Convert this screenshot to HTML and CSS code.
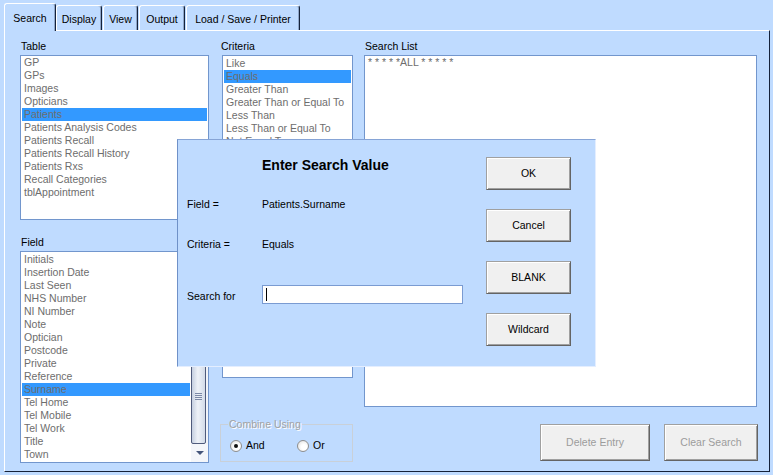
FILE: index.html
```html
<!DOCTYPE html>
<html>
<head>
<meta charset="utf-8">
<title>Search</title>
<link rel="stylesheet" href="styles.css">
</head>
<body>
<div class="tabs">
  <div class="tab tab-active tab-search">Search</div>
  <div class="tab tab-display">Display</div>
  <div class="tab tab-view">View</div>
  <div class="tab tab-output">Output</div>
  <div class="tab tab-load">Load / Save / Printer</div>
</div>
<div class="panel">
  <div class="col col-left">
    <div class="label">Table</div>
    <div class="list list-table">
      <div class="item">GP</div>
      <div class="item">GPs</div>
      <div class="item">Images</div>
      <div class="item">Opticians</div>
      <div class="item sel">Patients</div>
      <div class="item">Patients Analysis Codes</div>
      <div class="item">Patients Recall</div>
      <div class="item">Patients Recall History</div>
      <div class="item">Patients Rxs</div>
      <div class="item">Recall Categories</div>
      <div class="item">tblAppointment</div>
    </div>
    <div class="label label-field">Field</div>
    <div class="list list-field">
      <div class="items">
        <div class="item">Initials</div>
        <div class="item">Insertion Date</div>
        <div class="item">Last Seen</div>
        <div class="item">NHS Number</div>
        <div class="item">NI Number</div>
        <div class="item">Note</div>
        <div class="item">Optician</div>
        <div class="item">Postcode</div>
        <div class="item">Private</div>
        <div class="item">Reference</div>
        <div class="item sel">Surname</div>
        <div class="item">Tel Home</div>
        <div class="item">Tel Mobile</div>
        <div class="item">Tel Work</div>
        <div class="item">Title</div>
        <div class="item">Town</div>
      </div>
      <div class="scrollbar">
        <div class="sb-up"></div>
        <div class="sb-track">
          <div class="sb-thumb"><div class="sb-grip"></div></div>
        </div>
        <div class="sb-down"><span class="sb-arrow"></span></div>
      </div>
    </div>
  </div>
  <div class="col col-criteria">
    <div class="label">Criteria</div>
    <div class="list list-criteria">
      <div class="item">Like</div>
      <div class="item sel">Equals</div>
      <div class="item">Greater Than</div>
      <div class="item">Greater Than or Equal To</div>
      <div class="item">Less Than</div>
      <div class="item">Less Than or Equal To</div>
      <div class="item">Not Equal To</div>
      <div class="item">Not Like</div>
      <div class="item">Is Null</div>
      <div class="item">Is Not Null</div>
    </div>
    <fieldset class="combine">
      <legend>Combine Using</legend>
      <div class="radios">
        <div class="radio radio-and"><span class="radio-dot checked"></span>And</div>
        <div class="radio"><span class="radio-dot"></span>Or</div>
      </div>
    </fieldset>
  </div>
  <div class="col col-search">
    <div class="label">Search List</div>
    <div class="list list-search">
      <div class="item">* * * * *ALL * * * * *</div>
    </div>
    <div class="actions">
      <button class="btn btn-disabled btn-delete">Delete Entry</button>
      <button class="btn btn-disabled btn-clear">Clear Search</button>
    </div>
  </div>
</div>

<div class="dialog">
  <div class="dlg-main">
    <div class="dlg-title">Enter Search Value</div>
    <div class="dlg-row row-field"><span class="dlg-key">Field =</span><span>Patients.Surname</span></div>
    <div class="dlg-row row-criteria"><span class="dlg-key">Criteria =</span><span>Equals</span></div>
    <div class="dlg-row row-search"><span class="dlg-key key-search">Search for</span><div class="dlg-input"><span class="caret"></span></div></div>
  </div>
  <div class="dlg-buttons">
    <button class="btn btn-dlg">OK</button>
    <button class="btn btn-dlg">Cancel</button>
    <button class="btn btn-dlg">BLANK</button>
    <button class="btn btn-dlg">Wildcard</button>
  </div>
</div>
</body>
</html>
```
FILE: styles.css
```css
* { box-sizing: border-box; }
html, body { margin: 0; padding: 0; }
body {
  width: 773px;
  height: 475px;
  overflow: hidden;
  position: relative;
  background: #bfdbff;
  font-family: "Liberation Sans", Arial, sans-serif;
  font-size: 10.5px;
  line-height: 13px;
  color: #000;
}

/* Tabs */
.tabs {
  display: flex;
  align-items: flex-end;
  height: 30px;
  padding: 3px 0 0 4px;
  position: relative;
  z-index: 2;
}
.tab {
  height: 25px;
  padding-top: 7px;
  text-align: center;
  white-space: nowrap;
  background: #bfdbff;
  border-left: 1px solid #fff;
  border-top: 1px solid #fff;
  border-right: 1px solid #15223a;
  border-radius: 3px 3px 0 0;
  box-shadow: inset -1px 0 0 #8ea5c8;
  margin-left: 1px;
}
.tab-active {
  height: 28px;
  margin-bottom: -1px;
  padding-top: 8px;
  margin-left: 0;
}
.tab-search { width: 52px; }
.tab-display { width: 46px; margin-left: 0; }
.tab-view { width: 35px; }
.tab-output { width: 46px; }
.tab-load { width: 114px; }

/* Panel */
.panel {
  position: relative;
  z-index: 1;
  margin-left: 4px;
  width: 766px;
  height: 442px;
  border-top: 1px solid #fff;
  border-left: 1px solid #fff;
  border-right: 1px solid #15223a;
  border-bottom: 1px solid #15223a;
  display: flex;
  align-items: flex-start;
  padding: 9px 0 0 15px;
}
.col { display: flex; flex-direction: column; }
.col-left { width: 189px; }
.col-criteria { width: 131px; margin-left: 13px; }
.col-search { width: 393px; margin-left: 11px; }

.label {
  height: 13px;
  margin-bottom: 2px;
  padding-left: 1px;
  white-space: nowrap;
}
.col-criteria .label { margin-left: -1px; padding-left: 0; }
.label-field { margin-top: 16px; }

.list {
  background: #fff;
  border: 1px solid #7296cd;
  color: #6d6d6d;
  overflow: hidden;
}
.list-table { height: 165px; }
.list-field { height: 212px; display: flex; }
.list-criteria { height: 323px; padding-top: 1px; }
.list-search { height: 352px; }

.item {
  height: 13px;
  margin: 0 1px;
  padding-left: 2px;
  white-space: nowrap;
  overflow: hidden;
}
.item.sel { background: #3399ff; }

.items { flex: 1; padding-top: 1px; overflow: hidden; }

/* Scrollbar */
.scrollbar {
  width: 17px;
  flex: none;
  display: flex;
  flex-direction: column;
  background: #f2f4f8;
}
.sb-up { height: 17px; flex: none; }
.sb-track {
  flex: 1;
  display: flex;
  flex-direction: column;
  justify-content: flex-end;
}
.sb-thumb {
  height: 95px;
  width: 15px;
  border: 1px solid #4f5b7c;
  border-radius: 2px;
  background: linear-gradient(to right, #c5cfe0, #eef2f8 45%, #d3dbe8);
  display: flex;
  align-items: center;
  justify-content: center;
}
.sb-grip {
  width: 7px;
  height: 7px;
  background: repeating-linear-gradient(to bottom, #7b88a6 0 1px, transparent 1px 2px);
}
.sb-down {
  height: 18px;
  flex: none;
  display: flex;
  align-items: center;
  justify-content: center;
  background: #f4f6fa;
}
.sb-arrow {
  width: 0;
  height: 0;
  border-left: 4px solid transparent;
  border-right: 4px solid transparent;
  border-top: 4px solid #44557a;
}

/* Combine Using */
.combine {
  margin: 40px 0 0 -2px;
  width: 133px;
  height: 44px;
  padding: 0;
  border: 1px solid #c9d0d8;
  min-width: 0;
}
.combine legend {
  margin-left: 7px;
  padding: 0 1px;
  color: #a2a2a2;
  text-shadow: 1px 1px 0 #fff;
  line-height: 13px;
}
.radios {
  display: flex;
  align-items: center;
  margin-top: 8px;
  padding-left: 9px;
}
.radio { display: flex; align-items: center; }
.radio-and { width: 67px; }
.radio-dot {
  width: 12px;
  height: 12px;
  margin-right: 4px;
  border-radius: 50%;
  border: 1px solid #8e8e8e;
  background: radial-gradient(circle at 60% 60%, #ffffff 30%, #dcdcdc 100%);
  display: flex;
  align-items: center;
  justify-content: center;
}
.radio-dot.checked::after {
  content: "";
  width: 4px;
  height: 4px;
  border-radius: 50%;
  background: #111;
}

/* Buttons */
.btn {
  font-family: "Liberation Sans", Arial, sans-serif;
  font-size: 10.5px;
  line-height: 13px;
  color: #000;
  background: #f0f0f0;
  border: 1px solid;
  border-color: #a0a0a0 #646464 #646464 #a0a0a0;
  box-shadow: inset 1px 1px 0 #fff, inset -1px -1px 0 #a0a0a0;
  padding: 0;
  margin: 0;
  border-radius: 0;
}
.btn-disabled { color: #9c9c9c; }
.actions {
  display: flex;
  justify-content: flex-end;
  gap: 14px;
  margin-top: 17px;
  margin-right: -1px;
}
.btn-delete { width: 110px; height: 37px; }
.btn-clear { width: 94px; height: 37px; }

/* Dialog */
.dialog {
  position: absolute;
  left: 177px;
  top: 139px;
  width: 419px;
  height: 228px;
  z-index: 5;
  background: #bfdbff;
  border: 1px solid;
  border-color: #86a4d6 #e4eeff #e4eeff #6f91c8;
  display: flex;
  padding: 17px 24px 0 9px;
}
.dlg-main { flex: 1; }
.dlg-title {
  margin-left: 75px;
  height: 17px;
  font-size: 14px;
  line-height: 17px;
  font-weight: bold;
  white-space: nowrap;
}
.dlg-row { display: flex; align-items: flex-start; white-space: nowrap; }
.dlg-key { width: 75px; flex: none; }
.row-field { margin-top: 24px; }
.row-criteria { margin-top: 27px; }
.row-search { margin-top: 34px; }
.key-search { margin-top: 5px; }
.dlg-input {
  width: 201px;
  height: 19px;
  background: #fff;
  border: 1px solid #7a9bd2;
  display: flex;
  align-items: flex-start;
}
.caret {
  width: 1px;
  height: 13px;
  margin: 2px 0 0 3px;
  background: #000;
}
.dlg-buttons {
  display: flex;
  flex-direction: column;
  gap: 19px;
  width: 85px;
}
.btn-dlg { width: 85px; height: 33px; }
```
